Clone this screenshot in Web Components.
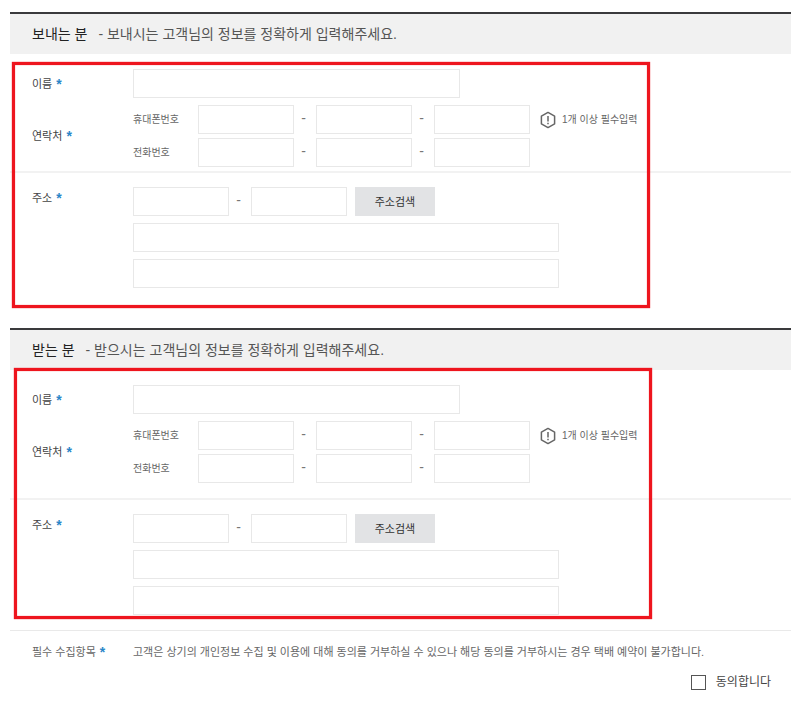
<!DOCTYPE html>
<html lang="ko">
<head>
<meta charset="utf-8">
<meta name="viewport" content="width=device-width, initial-scale=1">
<title>택배 예약</title>
<style>
  body {
    margin: 0;
    padding: 12px 9px 12px 10px;
    background: #fff;
    color: #444;
    font-family: "Liberation Sans", "Noto Sans CJK KR", sans-serif;
    font-size: 11px;
    line-height: 16px;
  }
</style>
</head>
<body>
<booking-form></booking-form>

<template id="required-mark"><style>
    :host { display: inline; margin-left: 4px; color: #2a86c8; font-size: 14px; font-weight: bold; line-height: 0; vertical-align: -1px; }
  </style><span aria-hidden="true">*</span></template>

<template id="alert-note">
  <style>
    :host { display: flex; align-items: center; gap: 6px; font-size: 10px; color: #666; white-space: nowrap; }
    svg { display: block; width: 16px; height: 18px; flex: none; }
  </style>
  <svg viewBox="0 0 16 18" fill="none" stroke="#666" aria-hidden="true">
    <path d="M8 1.4 14.6 5.2V12.8L8 16.6 1.4 12.8V5.2Z" stroke-width="1.5" stroke-linejoin="round"/>
    <path d="M8 5V10.4M8 11.8V13.2" stroke-width="1.5"/>
  </svg>
  <slot></slot>
</template>

<template id="form-row">
  <style>
    :host { display: grid; grid-template-columns: 101px minmax(0, 1fr); align-items: center; padding-left: 22px; }
    :host([top]) { align-items: start; }
    :host([top]) .label { margin-top: 3px; }
  </style>
  <div class="label"><slot name="label"></slot></div>
  <slot></slot>
</template>

<template id="name-field">
  <style>
    :host { display: block; }
    input { box-sizing: border-box; width: 327px; max-width: 100%; height: 29px; margin: 0; padding: 0 8px; border: 1px solid #e8e8e8; background: #fff; font: inherit; color: inherit; }
  </style>
  <form-row>
    <span slot="label"><label for="name">이름</label><required-mark></required-mark></span>
    <input id="name" type="text" required>
  </form-row>
</template>

<template id="phone-line">
  <style>
    :host { display: flex; align-items: center; }
    label { width: 65px; font-size: 10px; color: #666; flex: none; }
    input { box-sizing: border-box; width: 96px; height: 29px; margin: 0; padding: 0 8px; border: 1px solid #e8e8e8; background: #fff; font: inherit; color: inherit; min-width: 0; }
    .dash { box-sizing: border-box; width: 22px; padding: 0 3px 3px 0; text-align: center; font-size: 14px; color: #777; flex: none; }
    slot { display: block; margin-left: 10px; }
  </style>
  <label for="first"></label>
  <input id="first" type="tel" maxlength="4">
  <span class="dash">-</span>
  <input type="tel" maxlength="4" aria-label="가운데 번호">
  <span class="dash">-</span>
  <input type="tel" maxlength="4" aria-label="끝 번호">
  <slot></slot>
</template>

<template id="contact-field">
  <style>
    :host { display: block; }
    .lines { display: grid; gap: 4px; }
  </style>
  <form-row role="group" aria-label="연락처">
    <span slot="label">연락처<required-mark></required-mark></span>
    <div class="lines">
      <phone-line label="휴대폰번호"><alert-note>1개 이상 필수입력</alert-note></phone-line>
      <phone-line label="전화번호"></phone-line>
    </div>
  </form-row>
</template>

<template id="address-field">
  <style>
    :host { display: block; padding-top: 14px; border-top: 2px solid #f2f2f2; }
    .lines { display: grid; gap: 7px; }
    .zip { display: flex; align-items: center; }
    input { box-sizing: border-box; width: 426px; max-width: 100%; height: 29px; margin: 0; padding: 0 8px; border: 1px solid #e8e8e8; background: #fff; font: inherit; color: inherit; min-width: 0; }
    .zip input { width: 96px; }
    .dash { box-sizing: border-box; width: 22px; padding: 0 3px 3px 0; text-align: center; font-size: 14px; color: #777; flex: none; }
    button { width: 80px; height: 29px; margin: 0 0 0 8px; padding: 0; border: 0; background: #e2e3e5; color: #333; font: inherit; cursor: pointer; }
  </style>
  <form-row top>
    <span slot="label"><label for="zip">주소</label><required-mark></required-mark></span>
    <div class="lines">
      <div class="zip">
        <input id="zip" type="text" required>
        <span class="dash">-</span>
        <input type="text" aria-label="우편번호 뒷자리">
        <button type="button">주소검색</button>
      </div>
      <input type="text" aria-label="기본 주소">
      <input type="text" aria-label="상세 주소">
    </div>
  </form-row>
</template>

<template id="person-section">
  <style>
    :host { display: block; position: relative; }
    header { display: flex; align-items: center; gap: 11px; height: 40px; padding-left: 22px; border-top: 2px solid #3a3a3c; background: #f1f1f1; font-size: 14px; line-height: 20px; color: #555; }
    h2 { margin: 0; font: inherit; color: #222; }
    p { margin: 0; }
    .fields { display: grid; gap: 7px; padding-top: 15px; }
    contact-field { padding-bottom: var(--contact-space, 4px); }
    address-field { margin-top: -7px; }
    /* Highlight frame drawn over the fields */
    .frame { position: absolute; box-sizing: border-box; inset: var(--frame-inset); width: 638px; max-width: 100%; border: 3px solid #ee151e; box-shadow: 0 0 1px #ee151e, inset 0 0 1px #ee151e; pointer-events: none; }
  </style>
  <header><h2><slot name="title"></slot></h2><p>- <slot name="description"></slot></p></header>
  <div class="fields">
    <name-field></name-field>
    <contact-field></contact-field>
    <address-field></address-field>
  </div>
  <div class="frame"></div>
</template>

<template id="consent-section">
  <style>
    :host { display: block; border-top: 1px solid #e9e9e9; padding: 13px 20px 0 0; color: #666; }
    .agree { display: flex; justify-content: flex-end; align-items: center; gap: 10px; margin-top: 13px; font-size: 12px; line-height: 18px; color: #444; }
    input { appearance: none; box-sizing: border-box; width: 15px; height: 15px; margin: 0; border: 1px solid #555; background: #fff; }
    input:checked { background: #666; }
    p { margin: 0; }
  </style>
  <form-row>
    <span slot="label">필수 수집항목<required-mark></required-mark></span>
    <p>고객은 상기의 개인정보 수집 및 이용에 대해 동의를 거부하실 수 있으나 해당 동의를 거부하시는 경우 택배 예약이 불가합니다.</p>
  </form-row>
  <div class="agree"><input id="agree" type="checkbox"><label for="agree">동의합니다</label></div>
</template>

<template id="booking-form">
  <style>
    :host { display: block; }
    .sender { --frame-inset: 50px auto -20px 2px; }
    .receiver { --frame-inset: 40px auto -4px 4px; --contact-space: 15px; margin-top: 40px; }
    consent-section { margin-top: 15px; }
  </style>
  <person-section class="sender">
    <span slot="title">보내는 분</span>
    <span slot="description">보내시는 고객님의 정보를 정확하게 입력해주세요.</span>
  </person-section>
  <person-section class="receiver">
    <span slot="title">받는 분</span>
    <span slot="description">받으시는 고객님의 정보를 정확하게 입력해주세요.</span>
  </person-section>
  <consent-section></consent-section>
</template>

<script>
  class TemplateElement extends HTMLElement {
    constructor() {
      super();
      const template = document.getElementById(this.localName);
      this.attachShadow({ mode: "open" }).append(document.importNode(template.content, true));
    }
  }

  class PhoneLine extends TemplateElement {
    connectedCallback() {
      this.shadowRoot.querySelector("label").textContent = this.getAttribute("label");
    }
  }

  customElements.define("required-mark", class extends TemplateElement {});
  customElements.define("alert-note", class extends TemplateElement {});
  customElements.define("form-row", class extends TemplateElement {});
  customElements.define("name-field", class extends TemplateElement {});
  customElements.define("phone-line", PhoneLine);
  customElements.define("contact-field", class extends TemplateElement {});
  customElements.define("address-field", class extends TemplateElement {});
  customElements.define("person-section", class extends TemplateElement {});
  customElements.define("consent-section", class extends TemplateElement {});
  customElements.define("booking-form", class extends TemplateElement {});
</script>
</body>
</html>
